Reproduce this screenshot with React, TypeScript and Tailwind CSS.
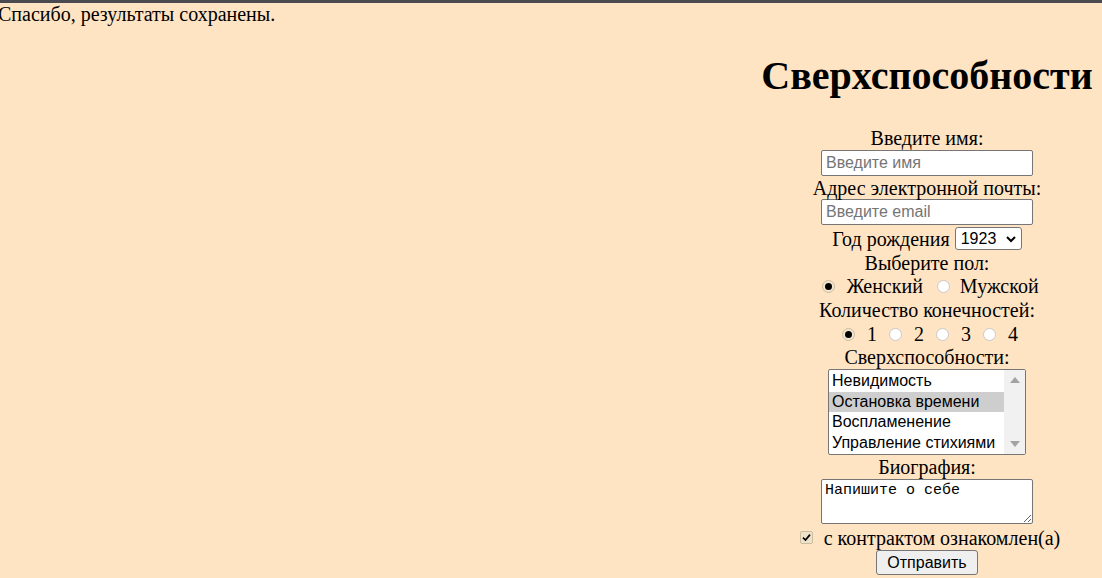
import React from 'react';

const powers = ['Невидимость', 'Остановка времени', 'Воспламенение', 'Управление стихиями'];

function FakeSelect({ value }: { value: string }) {
  return (
    <span className="inline-flex items-center justify-between h-[23px] w-[67px] pl-[5px] pr-[4px] bg-white border border-[#767676] rounded-[3px] font-['Liberation_Sans'] text-[16px] leading-none">
      {value}
      <svg width="12" height="12" viewBox="0 0 12 12" className="ml-1">
        <path d="M2 4 L6 8 L10 4" fill="none" stroke="#000" strokeWidth="2" />
      </svg>
    </span>
  );
}

function Radio({ checked, className = '' }: { checked?: boolean; className?: string }) {
  return checked ? (
    <span className={`flex items-center justify-center w-[13px] h-[13px] rounded-full border border-[#cbbd9f] bg-[#f3e6cf] ${className}`}>
      <span className="w-[7px] h-[7px] rounded-full bg-black" />
    </span>
  ) : (
    <span className={`w-[13px] h-[13px] rounded-full border border-[#c9c9c9] bg-white ${className}`} />
  );
}

function Checkbox() {
  return (
    <span className="flex items-center justify-center w-[13px] h-[13px] rounded-[2px] border border-[#cbbd9f] bg-[#f0e2c6]">
      <svg width="9" height="9" viewBox="0 0 9 9">
        <path d="M1 4.6 L3.5 7 L8 1.6" fill="none" stroke="#000" strokeWidth="1.7" />
      </svg>
    </span>
  );
}

function PowersList() {
  return (
    <div className="mx-auto flex w-[198px] h-[86px] bg-white border border-[#767676] rounded-[2px] overflow-hidden font-['Liberation_Sans'] text-[16px] text-left">
      <div className="flex-1 pt-[1px]">
        {powers.map((p, i) => (
          <div
            key={p}
            className={`h-[20.5px] leading-[20.5px] pl-[3px] whitespace-nowrap ${i === 1 ? 'bg-[#cecece]' : ''}`}
          >
            {p}
          </div>
        ))}
      </div>
      <div className="w-[21px] bg-[#f1f1f1] flex flex-col justify-between items-center py-[7px]">
        <svg width="10" height="6" viewBox="0 0 10 6">
          <path d="M0 6 L5 0 L10 6 Z" fill="#a3a3a3" />
        </svg>
        <svg width="10" height="6" viewBox="0 0 10 6">
          <path d="M0 0 L5 6 L10 0 Z" fill="#a3a3a3" />
        </svg>
      </div>
    </div>
  );
}

export default function App() {
  const textInput =
    "block mx-auto w-[212px] h-[26px] px-[4px] bg-white border border-[#767676] rounded-[2px] font-['Liberation_Sans'] text-[16px] placeholder:text-[#757575] outline-none";

  return (
    <div className="min-h-screen bg-[#ffe4c4] border-t-[3px] border-[#4a4a51] font-['Liberation_Serif'] text-[20px] text-black">
      <p className="-ml-[2px] leading-[23px]">Спасибо, результаты сохранены.</p>

      <div className="flex justify-end">
        <form className="w-[350px] text-center">
          <h1 className="mt-[27px] mb-[27px] text-[40px] leading-[46px] font-bold">Сверхспособности</h1>

          <div className="h-[24px] leading-[25px]">Введите имя:</div>
          <input className={textInput} placeholder="Введите имя" />

          <div className="h-[23px] leading-[24px]">Адрес электронной почты:</div>
          <input className={textInput} placeholder="Введите email" />

          <div className="h-[26px] flex items-center justify-center gap-[5px] pt-[1px]">
            <span>Год рождения</span>
            <FakeSelect value="1923" />
          </div>

          <div className="h-[23px] leading-[24px]">Выберите пол:</div>
          <div className="h-[24px] flex items-center justify-center pl-[7px]">
            <Radio checked />
            <span className="ml-[11px]">Женский</span>
            <Radio className="ml-[14px]" />
            <span className="ml-[10px]">Мужской</span>
          </div>

          <div className="h-[24px] leading-[24px]">Количество конечностей:</div>
          <div className="h-[24px] flex items-center justify-center pl-[6px]">
            {['1', '2', '3', '4'].map((n, i) => (
              <React.Fragment key={n}>
                <Radio checked={i === 0} className={i === 0 ? '' : 'ml-[12px]'} />
                <span className="ml-[12px]">{n}</span>
              </React.Fragment>
            ))}
          </div>

          <div className="h-[23px] leading-[23px]">Сверхспособности:</div>
          <PowersList />

          <div className="h-[23px] leading-[23px] mt-[1px]">Биография:</div>
          <div className="h-[46px]">
            <textarea
              className="block mx-auto w-[212px] h-[45px] p-[2px] px-[3px] bg-white border border-[#767676] rounded-[2px] font-['Liberation_Mono'] text-[15px] leading-[17px] outline-none"
              defaultValue="Напишите о себе"
            />
          </div>

          <div className="h-[25px] flex items-center justify-center pl-[6px]">
            <Checkbox />
            <span className="ml-[11px]">с контрактом ознакомлен(а)</span>
          </div>

          <button
            type="button"
            className="block mx-auto w-[102px] h-[25px] bg-[#efefef] border border-[#767676] rounded-[3px] font-['Liberation_Sans'] text-[16px] leading-none"
          >
            Отправить
          </button>
        </form>
      </div>
    </div>
  );
}
